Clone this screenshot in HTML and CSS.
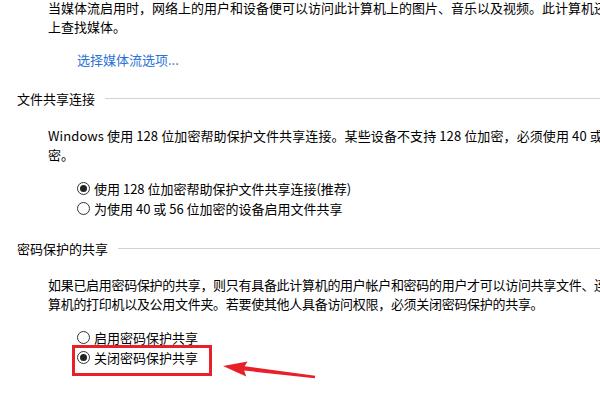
FILE: index.html
```html
<!DOCTYPE html>
<html lang="zh-CN">

<head>
    <meta charset="UTF-8">
    <meta name="viewport" content="width=device-width, initial-scale=1.0">
    <title>高级共享设置</title>
    <link rel="stylesheet" href="styles.css">
</head>

<body>
    <div class="page">
        <!-- 媒体流 -->
        <p class="para para_first">当媒体流启用时，网络上的用户和设备便可以访问此计算机上的图片、音乐以及视频。此计算机还可以在网络<br>上查找媒体。</p>
        <a class="link" href="">选择媒体流选项...</a>

        <!-- 文件共享连接 -->
        <div class="heading">
            <span>文件共享连接</span>
            <i class="heading_line"></i>
        </div>
        <p class="para para_win">Windows 使用 128 位加密帮助保护文件共享连接。某些设备不支持 128 位加密，必须使用 40 或 56 位加<br>密。</p>
        <ul class="radios radios_conn">
            <li><span class="radio checked"></span>使用 128 位加密帮助保护文件共享连接(推荐)</li>
            <li><span class="radio"></span>为使用 40 或 56 位加密的设备启用文件共享</li>
        </ul>

        <!-- 密码保护的共享 -->
        <div class="heading heading_pwd">
            <span>密码保护的共享</span>
            <i class="heading_line"></i>
        </div>
        <p class="para para_pwd">如果已启用密码保护的共享，则只有具备此计算机的用户帐户和密码的用户才可以访问共享文件、连接到此计<br>算机的打印机以及公用文件夹。若要使其他人具备访问权限，必须关闭密码保护的共享。</p>
        <ul class="radios radios_pwd">
            <li><span class="radio"></span>启用密码保护共享</li>
            <li><span class="radio checked"></span>关闭密码保护共享</li>
        </ul>

        <!-- 标注 -->
        <div class="mark_box"></div>
        <svg class="mark_arrow" width="600" height="400" viewBox="0 0 600 400">
            <polygon points="223,368 247.6,363.4 244.6,368.3 315.2,377.8 314.8,380.2 244.2,372.6 246.2,378.4" fill="#e8202a" />
        </svg>
    </div>
</body>

</html>
```

FILE: styles.css
```css
* {
    padding: 0;
    margin: 0;
    list-style: none;
    text-decoration: none;
}

body {
    width: 600px;
    height: 400px;
    overflow: hidden;
    background: #FFFFFF;
    font-family: "Noto Sans CJK SC", "Noto Sans", sans-serif;
    font-size: 13px;
    line-height: 19px;
    color: #000000;
}

.page {
    position: relative;
    height: 400px;
}

.para {
    margin-left: 48px;
    white-space: nowrap;
}

.para_first {
    margin-top: -2px;
}

.link {
    display: block;
    margin: 14px 0 0 77px;
    color: #2a72d6;
}

.heading {
    display: flex;
    align-items: center;
    margin: 20px 0 0 17px;
}

.heading_line {
    flex: 1;
    height: 1px;
    margin-left: 10px;
    background: #d2d2d2;
}

.heading_pwd {
    margin-top: 20px;
}

.para_win {
    margin-top: 18px;
    letter-spacing: 0.1px;
}

.para_pwd {
    margin-top: 17px;
    letter-spacing: -0.3px;
}

.radios {
    margin-left: 77px;
}

.radios_conn {
    margin-top: 14px;
}

.radios_pwd {
    margin-top: 14px;
}

.radios>li {
    display: flex;
    align-items: center;
    height: 20.5px;
    white-space: nowrap;
}

.radio {
    width: 13px;
    height: 13px;
    margin-right: 4px;
    border: 1px solid #333333;
    border-radius: 50%;
    box-sizing: border-box;
    display: flex;
    justify-content: center;
    align-items: center;
}

.radio.checked::after {
    content: "";
    width: 7px;
    height: 7px;
    border-radius: 50%;
    background: #222222;
}

.mark_box {
    position: absolute;
    left: 72px;
    top: 347px;
    width: 140px;
    height: 31px;
    border: 3px solid #e8202a;
    box-sizing: border-box;
}

.mark_arrow {
    position: absolute;
    left: 0;
    top: 0;
    pointer-events: none;
}
```
